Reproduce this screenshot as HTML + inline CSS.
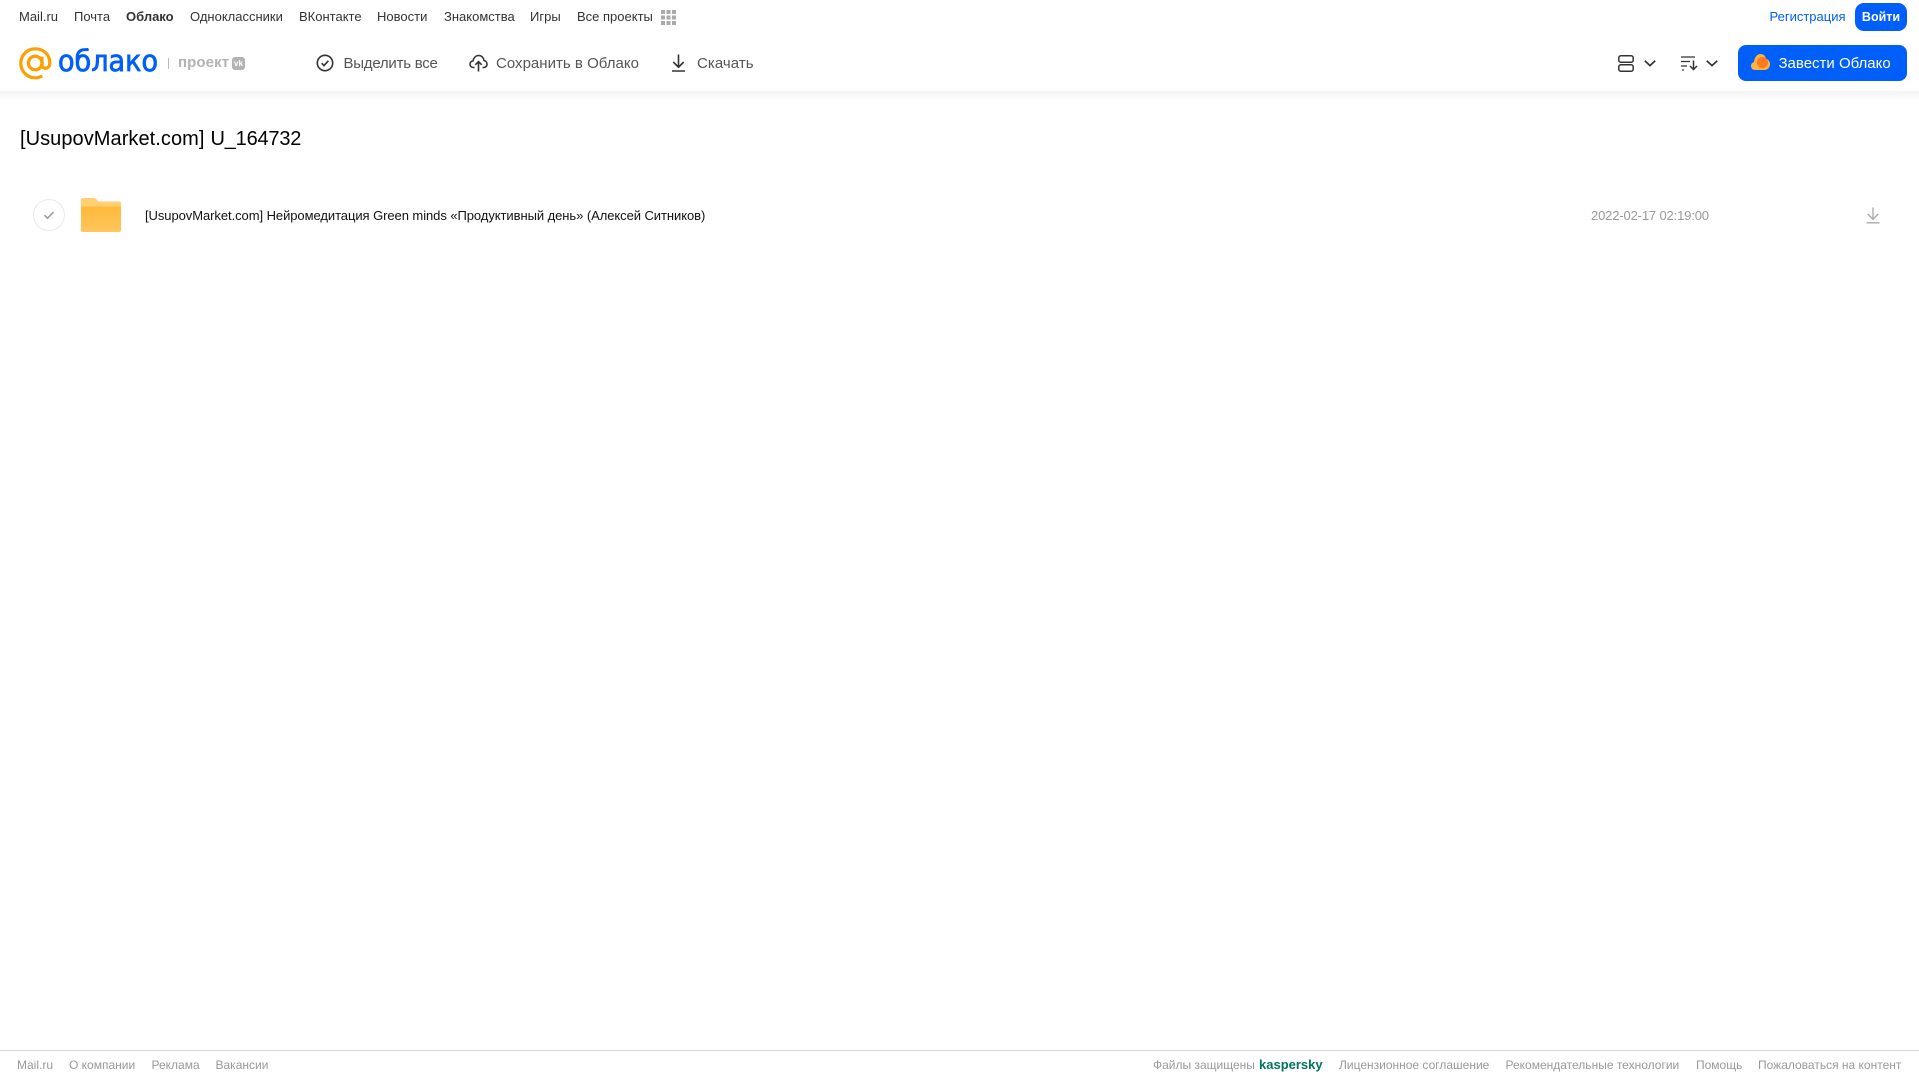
<!DOCTYPE html>
<html lang="ru">
<head>
<meta charset="utf-8">
<title>Облако</title>
<style>
html,body{margin:0;padding:0;background:#fff;width:1919px;height:1079px;overflow:hidden}
body{font-family:"Liberation Sans",Arial,sans-serif;position:relative}
.t{position:absolute;white-space:nowrap;line-height:20px;height:20px}
.n{font-size:13px;color:#333;top:7px}
.a{font-size:15px;color:#555;top:54px}
.f{font-size:12px;color:#999;top:1055px}
svg{position:absolute;overflow:visible}
#shade{position:absolute;left:0;top:91px;width:1919px;height:10px;background:linear-gradient(#f3f3f3,#fff)}
</style>
</head>
<body>
<div id="shade"></div>

<span class="t n" style="left:19px">Mail.ru</span>
<span class="t n" style="left:74px">Почта</span>
<span class="t n" style="left:126px;font-weight:bold">Облако</span>
<span class="t n" style="left:190px">Одноклассники</span>
<span class="t n" style="left:299px">ВКонтакте</span>
<span class="t n" style="left:377px">Новости</span>
<span class="t n" style="left:444px">Знакомства</span>
<span class="t n" style="left:530px">Игры</span>
<span class="t n" style="left:577px">Все проекты</span>
<svg style="left:661px;top:10px" width="15" height="15" fill="#aaa">
<rect x="0" y="0" width="4" height="4"/><rect x="5.500" y="0" width="4" height="4"/><rect x="11" y="0" width="4" height="4"/>
<rect x="0" y="5.500" width="4" height="4"/><rect x="5.500" y="5.500" width="4" height="4"/><rect x="11" y="5.500" width="4" height="4"/>
<rect x="0" y="11" width="4" height="4"/><rect x="5.500" y="11" width="4" height="4"/><rect x="11" y="11" width="4" height="4"/>
</svg>

<span class="t n" style="left:1769.500px;color:#005ff9">Регистрация</span>
<div style="position:absolute;left:1855px;top:3px;width:52px;height:28px;background:#005ff9;border-radius:9px;color:#fff;font-size:12.500px;font-weight:bold;line-height:28px;text-align:center">Войти</div>

<!-- logo -->
<svg style="left:19px;top:47px" width="33" height="33" viewBox="0 0 33 33" fill="none">
<circle cx="16.200" cy="16" r="6.800" stroke="#ff9e00" stroke-width="3.200"/>
<path d="M23 9.800V18c0 4.600 7.600 4.600 7.800-1.600C31 7.500 24.500 1.800 16.200 1.800 8.300 1.800 1.800 8.200 1.800 16.200c0 8.200 6.500 14.600 14.400 14.600 2.700 0 4.800-.6 7-1.800" stroke="#ff9e00" stroke-width="3.200"/>
</svg>
<svg style="left:57px;top:42px" width="104" height="40">
<text x="1" y="29" font-family="DejaVu Sans, sans-serif" font-size="29" fill="#005ff9" stroke="#005ff9" stroke-width=".8" textLength="100" lengthAdjust="spacingAndGlyphs">облако</text>
</svg>
<div style="position:absolute;left:168px;top:58px;width:1px;height:11px;background:#bbb"></div>
<span class="t" style="left:178px;top:53px;font-size:15px;font-weight:bold;color:#b3b3b3;letter-spacing:.1px">проект</span>
<div style="position:absolute;left:232px;top:57px;width:13px;height:13px;background:#b3b3b3;border-radius:3px;color:#fff;font-size:8px;font-weight:bold;line-height:13px;text-align:center">vk</div>

<!-- toolbar -->
<svg style="left:316px;top:54px" width="18" height="18" viewBox="0 0 18 18" fill="none" stroke="#333" stroke-width="1.600">
<circle cx="9" cy="9" r="7.700"/><path d="M5.600 9.200l2.400 2.400 4.400-4.800"/>
</svg>
<span class="t a" style="left:343.500px;letter-spacing:-.24px">Выделить все</span>

<svg style="left:469px;top:54px" width="19" height="18" viewBox="0 0 19 18" fill="none" stroke="#333" stroke-width="1.600">
<path d="M5.500 13.500H4.500C2.500 13.500 1 12 1 10.200 1 8.400 2.300 7 4 6.900 4.700 3.700 6.900 1.500 9.700 1.500c2.800 0 4.900 2.100 5.300 5 1.700.3 3 1.800 3 3.700 0 1.800-1.500 3.300-3.400 3.300h-1.100"/>
<path d="M9.500 17.500V8M6.300 10.800l3.200-3.200 3.200 3.200"/>
</svg>
<span class="t a" style="left:496px;letter-spacing:.02px">Сохранить в Облако</span>

<svg style="left:671px;top:54px" width="15" height="18" viewBox="0 0 15 18" fill="none" stroke="#333" stroke-width="1.600">
<path d="M7.500 0.500V13M2.300 8l5.200 5.200L12.700 8M1 17h13"/>
</svg>
<span class="t a" style="left:697px;letter-spacing:.05px">Скачать</span>

<svg style="left:1618px;top:55px" width="16" height="17" viewBox="0 0 16 17" fill="none" stroke="#333" stroke-width="1.500">
<rect x=".8" y=".8" width="14.400" height="6.400" rx="2"/><rect x=".8" y="9.800" width="14.400" height="6.400" rx="2"/>
</svg>
<svg style="left:1644px;top:60px" width="12" height="7" viewBox="0 0 12 7" fill="none" stroke="#333" stroke-width="1.700">
<path d="M.8 .8L6 5.600 11.200 .8"/>
</svg>
<svg style="left:1681px;top:56px" width="17" height="15" viewBox="0 0 17 15" fill="none" stroke="#333" stroke-width="1.300">
<path d="M0 1h14M0 5.500h9M0 10h6M1 14h2"/>
<path d="M12.500 4.500V13.500M9 10l3.500 3.500L16 10" stroke-width="1.500"/>
</svg>
<svg style="left:1706px;top:60px" width="12" height="7" viewBox="0 0 12 7" fill="none" stroke="#333" stroke-width="1.700">
<path d="M.8 .8L6 5.600 11.200 .8"/>
</svg>

<div style="position:absolute;left:1738px;top:45px;width:169px;height:36px;background:#005ff9;border-radius:8px"></div>
<svg style="left:1751px;top:54px" width="19" height="16" viewBox="0 0 19 16">
<path d="M4 16C1.500 16 0 14.200 0 12c0-2 1.300-3.600 3-3.900C3.300 3.500 6 0 9.500 0c3 0 5 2 5.500 4.700 2.300.5 4 2.800 4 5.500 0 3.200-2.400 5.800-5.500 5.800z" fill="#ffb340"/>
<circle cx="11.500" cy="8.500" r="5.500" fill="#ff7a1f"/>
</svg>
<span class="t" style="left:1778.500px;top:53.500px;font-size:15px;color:#fff">Завести Облако</span>

<!-- title -->
<span class="t" style="left:20px;top:129px;font-size:20px;color:#000;letter-spacing:.06px">[UsupovMarket.com]</span>
<span class="t" style="left:210.500px;top:129px;font-size:20px;color:#000;letter-spacing:-.2px">U_164732</span>

<!-- row -->
<svg style="left:33px;top:199px" width="32" height="32" viewBox="0 0 32 32" fill="none">
<circle cx="16" cy="16" r="15.500" stroke="#e9e9e9"/>
<path d="M11.500 16.200l3 3 6-6" stroke="#999" stroke-width="1.500"/>
</svg>
<svg style="left:81px;top:198px" width="40" height="34" viewBox="0 0 40 34">
<defs><linearGradient id="g" x1="0" y1="0" x2="0" y2="1"><stop offset="0" stop-color="#ffb93a"/><stop offset="1" stop-color="#ffc65c"/></linearGradient></defs>
<path d="M2 0h10c2 0 3 .8 4 2l1.500 1.500H38c1.200 0 2 .8 2 2V32c0 1.200-.8 2-2 2H2c-1.200 0-2-.8-2-2V2C0 .8.800 0 2 0z" fill="#ffcf70"/>
<path d="M0 8.500h40V32c0 1.200-.8 2-2 2H2c-1.200 0-2-.8-2-2z" fill="url(#g)"/>
</svg>
<span class="t" style="left:145px;top:206px;font-size:13px;color:#111;letter-spacing:-.065px">[UsupovMarket.com] Нейромедитация Green minds «Продуктивный день» (Алексей Ситников)</span>
<span class="t" style="left:1591px;top:206px;font-size:13px;color:#999;letter-spacing:-.15px">2022-02-17 02:19:00</span>
<svg style="left:1866px;top:207px" width="14" height="17" viewBox="0 0 14 17" fill="none" stroke="#aaa" stroke-width="1.400">
<path d="M7 .5V12M1.800 7L7 12.200 12.200 7M.5 15.800h13"/>
</svg>

<!-- footer -->
<div style="position:absolute;left:0;top:1050px;width:1919px;height:1px;background:#d9d9d9"></div>
<span class="t f" style="left:17px">Mail.ru</span>
<span class="t f" style="left:69px">О компании</span>
<span class="t f" style="left:151.500px">Реклама</span>
<span class="t f" style="left:215.500px">Вакансии</span>
<span class="t f" style="left:1153px">Файлы защищены</span>
<span class="t f" style="left:1259px;font-size:13px;font-weight:bold;color:#00745f">kaspersky</span>
<span class="t f" style="left:1339px">Лицензионное соглашение</span>
<span class="t f" style="left:1505.500px">Рекомендательные технологии</span>
<span class="t f" style="left:1696px">Помощь</span>
<span class="t f" style="left:1758px">Пожаловаться на контент</span>
</body>
</html>
